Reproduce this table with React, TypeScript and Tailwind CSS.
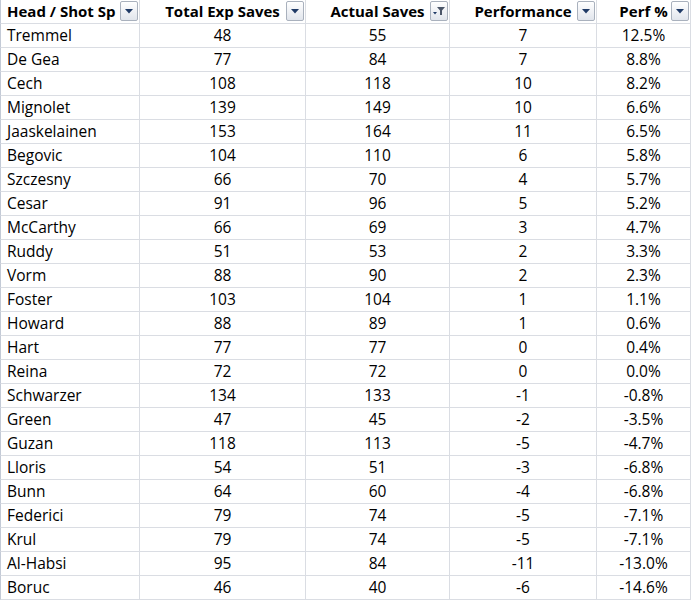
import React from "react";

type Row = [string, number, number, number, string];

const rows: Row[] = [
    ["Tremmel", 48, 55, 7, "12.5%"],
    ["De Gea", 77, 84, 7, "8.8%"],
    ["Cech", 108, 118, 10, "8.2%"],
    ["Mignolet", 139, 149, 10, "6.6%"],
    ["Jaaskelainen", 153, 164, 11, "6.5%"],
    ["Begovic", 104, 110, 6, "5.8%"],
    ["Szczesny", 66, 70, 4, "5.7%"],
    ["Cesar", 91, 96, 5, "5.2%"],
    ["McCarthy", 66, 69, 3, "4.7%"],
    ["Ruddy", 51, 53, 2, "3.3%"],
    ["Vorm", 88, 90, 2, "2.3%"],
    ["Foster", 103, 104, 1, "1.1%"],
    ["Howard", 88, 89, 1, "0.6%"],
    ["Hart", 77, 77, 0, "0.4%"],
    ["Reina", 72, 72, 0, "0.0%"],
    ["Schwarzer", 134, 133, -1, "-0.8%"],
    ["Green", 47, 45, -2, "-3.5%"],
    ["Guzan", 118, 113, -5, "-4.7%"],
    ["Lloris", 54, 51, -3, "-6.8%"],
    ["Bunn", 64, 60, -4, "-6.8%"],
    ["Federici", 79, 74, -5, "-7.1%"],
    ["Krul", 79, 74, -5, "-7.1%"],
    ["Al-Habsi", 95, 84, -11, "-13.0%"],
    ["Boruc", 46, 40, -6, "-14.6%"],
];

function FilterButton({ active = false }: { active?: boolean }) {
    return (
        <span className="absolute right-[1px] top-[1px] w-[18px] h-[20px] rounded-[2px] border border-[#a9b1bd] bg-gradient-to-b from-white to-[#e1e5ec] flex items-center justify-center">
            {active ? (
                <svg width="14" height="12" viewBox="0 0 14 12">
                    <path d="M5 2h8L10 5.5V10H8V5.5Z" fill="#4a5568" />
                    <path d="M1 7h4L3 9.5Z" fill="#1f3a66" />
                </svg>
            ) : (
                <svg width="8" height="5" viewBox="0 0 8 5">
                    <path d="M0 0h8L4 4.5Z" fill="#1f3a66" />
                </svg>
            )}
        </span>
    );
}

const cell = "h-[24px] border-b border-r border-[#dadde3] flex items-center relative";

export default function App() {
    return (
        <div className="w-[691px] h-[601px] overflow-hidden bg-white text-black font-['Open_Sans',sans-serif] text-[15.5px]">
            <div className="grid grid-cols-[140px_166px_144px_147px_94px]">
                {/* header */}
                <div className={`${cell} border-l border-l-[#c3cad6] pl-[6px] font-bold text-[15px]`}>
                    Head / Shot Sp
                    <FilterButton />
                </div>
                <div className={`${cell} justify-center font-bold text-[15px]`}>
                    Total Exp Saves
                    <FilterButton />
                </div>
                <div className={`${cell} justify-center font-bold text-[15px]`}>
                    Actual Saves
                    <FilterButton active />
                </div>
                <div className={`${cell} justify-center font-bold text-[15px]`}>
                    Performance
                    <FilterButton />
                </div>
                <div className={`${cell} justify-center font-bold text-[15px]`}>
                    Perf %
                    <FilterButton />
                </div>

                {rows.map((r) => (
                    <React.Fragment key={r[0]}>
                        <div className={`${cell} border-l border-l-[#c3cad6] pl-[6px]`}>{r[0]}</div>
                        <div className={`${cell} justify-center`}>{r[1]}</div>
                        <div className={`${cell} justify-center`}>{r[2]}</div>
                        <div className={`${cell} justify-center`}>{r[3]}</div>
                        <div className={`${cell} justify-center`}>{r[4]}</div>
                    </React.Fragment>
                ))}
            </div>
        </div>
    );
}
